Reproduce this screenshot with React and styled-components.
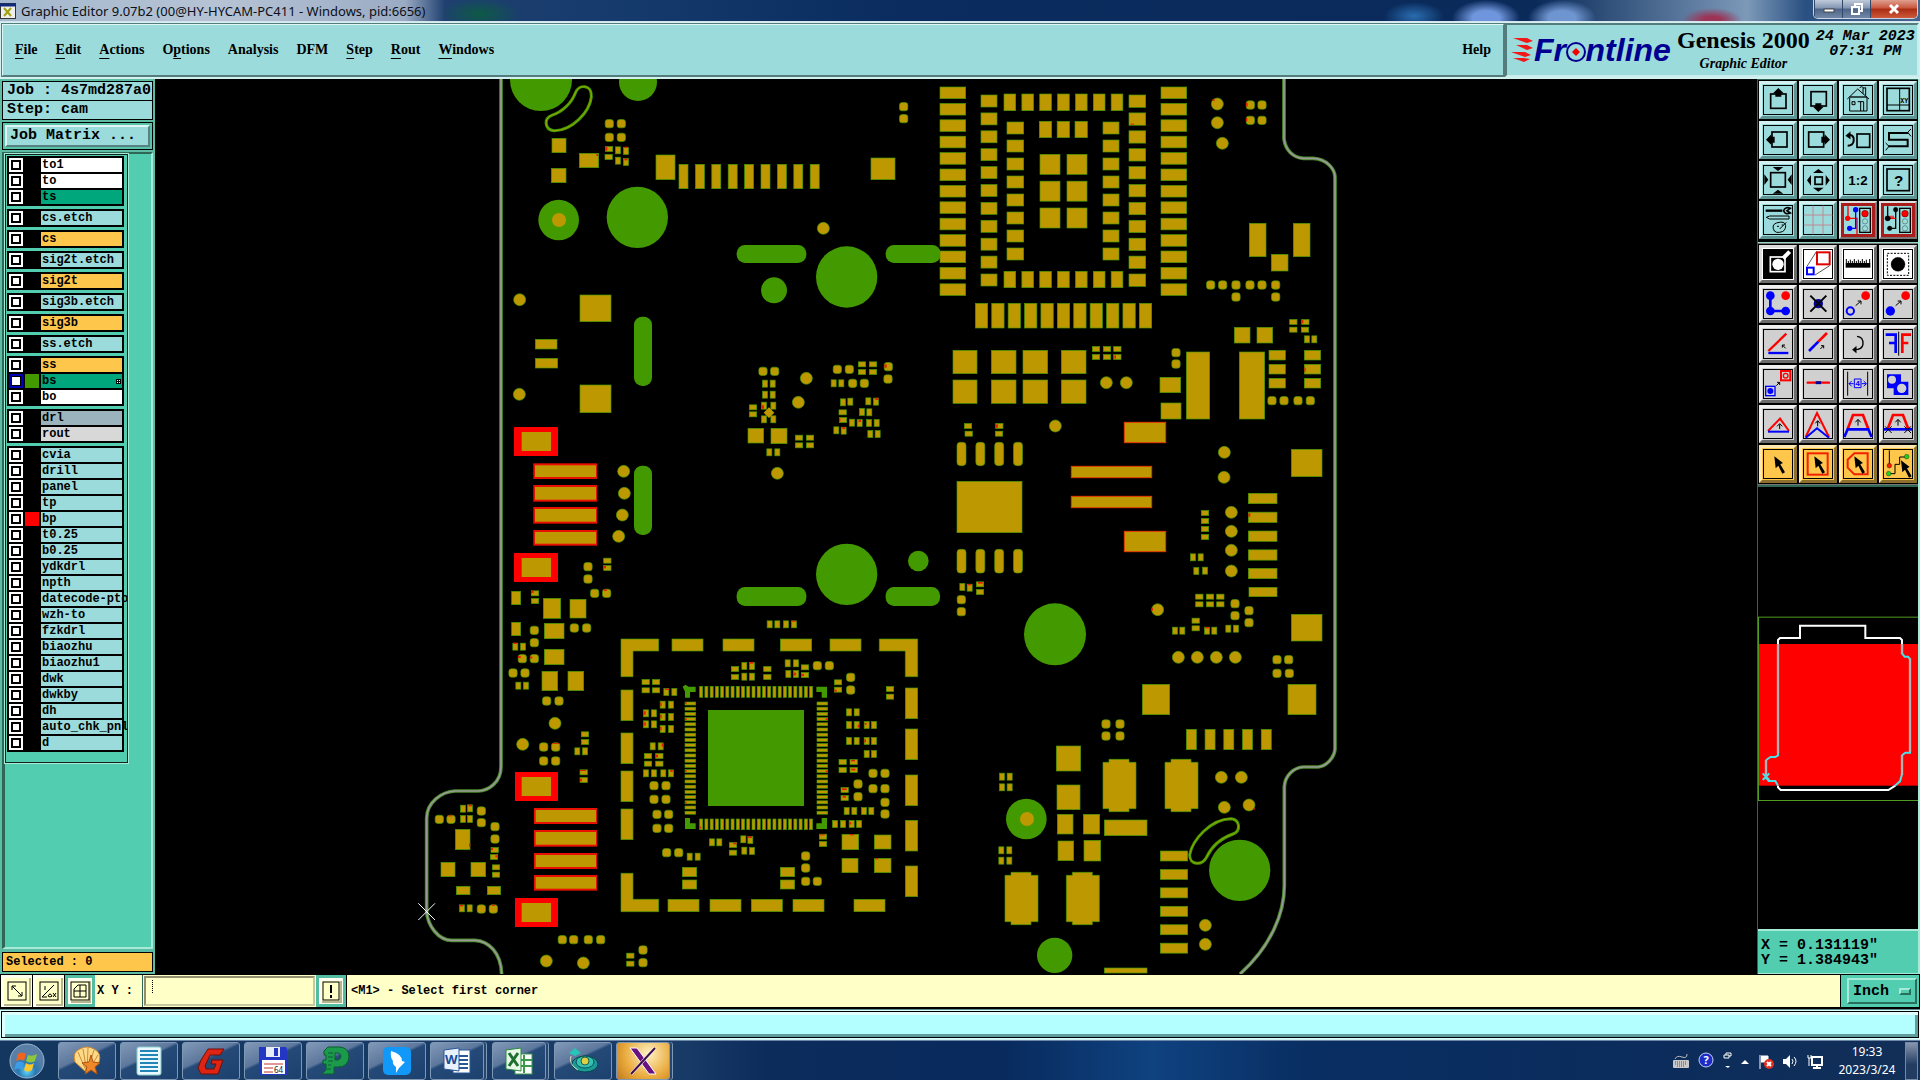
import React, {useState} from 'react';
import styled, {createGlobalStyle, css} from 'styled-components';

const GlobalStyle = createGlobalStyle`
    * {
        box-sizing: border-box;
    }
    body {
        margin: 0;
        background: #000;
        overflow: hidden;
    }
    button, input, select {
        font: inherit;
        color: inherit;
        margin: 0;
        padding: 0;
    }
    svg {
        display: block;
    }
`;

const mono = '"Liberation Mono", "DejaVu Sans Mono", monospace';
const serif = '"Liberation Serif", "DejaVu Serif", serif';
const sans = '"Noto Sans", "Open Sans", sans-serif';

const GOLD = '#bd9800';
const GREEN = '#439900';

const raised = (light, dark, width = 2) => css`
    border: ${width}px solid;
    border-color: ${light} ${dark} ${dark} ${light};
`;

const Desktop = styled.div`
    height: 100vh;
    display: flex;
    flex-direction: column;
    background: #000;
    color: #000;
    font-family: ${mono};
`;

/* title bar */

const TitleBar = styled.div`
    height: 22px;
    flex: none;
    display: flex;
    align-items: center;
    justify-content: space-between;
    border-bottom: 1px solid #d6e2ee;
    background:
        radial-gradient(ellipse 40px 16px at 480px 14px, #0d5a45 0%, transparent 100%),
        radial-gradient(ellipse 30px 14px at 1414px 16px, #2a6db0 0%, transparent 100%),
        radial-gradient(ellipse 34px 18px at 1486px 18px, #6f95dc 40%, transparent 100%),
        radial-gradient(ellipse 34px 18px at 1562px 18px, #6f95d0 40%, transparent 100%),
        radial-gradient(ellipse 30px 12px at 1712px 20px, #9c3456 30%, transparent 100%),
        linear-gradient(90deg, #a3b8ce 0, #b6c3d4 220px, #9aabc4 405px, #1f4070 445px, #153a6c 620px, #0a2c5e 900px, #0a2a5a 80%, #7c99b8 91%, #2a5082 94%, #44658f 100%);
`;

const TitleText = styled.div`
    display: flex;
    align-items: center;
    gap: 5px;
    font: 13px ${sans};
    line-height: 20px;
    color: #0b0f18;
    white-space: nowrap;
`;

const WindowButtons = styled.div`
    display: flex;
    align-self: flex-start;
    margin-right: 2px;
    border: 1px solid #c9d5e2;
    border-top: none;
    border-radius: 0 0 5px 5px;
    overflow: hidden;
`;

const WindowButton = styled.button`
    width: ${(props) => (props.$close ? 47 : 28)}px;
    height: 18px;
    display: grid;
    place-items: center;
    border: none;
    border-left: 1px solid #34486a;
    background: ${(props) => (props.$close
        ? 'linear-gradient(#e0a090, #c8553c 45%, #a82c12 50%, #cf5a3c)'
        : 'linear-gradient(#c0cbdb, #8295b2 45%, #4d6488 50%, #7288a8)')};
`;

/* header */

const Header = styled.header`
    display: flex;
    height: 57px;
    flex: none;
    padding: 1px 1px 2px;
    background: #d3f1f0;
`;

const HeaderPanel = styled.div`
    display: flex;
    align-items: center;
    background: #9bdbdb;
    border: 2px solid;
    border-color: #557c7c #c9eded #c9eded #557c7c;
`;

const MenuBar = styled(HeaderPanel)`
    flex: 1;
    border-color: #dff6f5 #557c7c #557c7c #dff6f5;
    outline: 1px solid #557c7c;
    outline-offset: -1px;
    padding: 0 12px;
    gap: 18px;
    font: bold 14px ${serif};
`;

const MenuButton = styled.button`
    border: none;
    background: none;
    margin-left: ${(props) => (props.$last ? 'auto' : '0')};
    u {
        text-underline-offset: 4px;
        text-decoration-thickness: 1px;
    }
`;

const Brand = styled(HeaderPanel)`
    width: 414px;
    padding: 0 1px 0 4px;
`;

const Product = styled.div`
    font: bold 24px ${serif};
    line-height: 28px;
    text-align: center;
    white-space: nowrap;
    em {
        display: block;
        font-size: 14px;
        line-height: 20px;
    }
`;

const HeaderClock = styled.div`
    align-self: flex-start;
    flex: 1;
    padding: 4px 0 0 5px;
    font: italic bold 15px ${mono};
    line-height: 15px;
    text-align: center;
    white-space: nowrap;
`;

/* work area */

const Workspace = styled.main`
    flex: 1;
    min-height: 0;
    display: flex;
`;

const Sidebar = styled.aside`
    width: 155px;
    flex: none;
    display: flex;
    flex-direction: column;
    padding: 2px 2px 2px;
    background: #5cbca4;
`;

const InfoBox = styled.div`
    height: 20px;
    margin-bottom: -1px;
    padding-left: 4px;
    border: 1px solid #000;
    background: #9bdbdb;
    font-size: 15px;
    font-weight: bold;
    line-height: 18px;
    white-space: nowrap;
`;

const MatrixFrame = styled.div`
    margin-top: 3px;
    padding: 2px;
    border: 1px solid #000;
    background: #58c4aa;
`;

const MatrixButton = styled.button`
    width: 100%;
    height: 22px;
    padding-left: 3px;
    background: #9bdbdb;
    ${raised('#dff6f5', '#578182')}
    font-size: 15px;
    font-weight: bold;
    line-height: 18px;
    text-align: left;
`;

const LayerArea = styled.div`
    flex: 1;
    min-height: 0;
    margin: 2px 0 3px;
    background: #52cdb0;
    border: 2px solid;
    border-color: #2f6757 #a8ead8 #a8ead8 #2f6757;
    border-left-width: 3px;
`;

const LayerList = styled.div`
    width: 123px;
    display: flex;
    flex-direction: column;
    gap: 3px;
    padding: 1px 3px 10px 1px;
    border: 1px solid #10241e;
    outline: 1px solid #a8ead8;
    overflow: hidden;
`;

const LayerGroup = styled.div`
    padding: 1px 1px 1px 2px;
    background: #000;
`;

const LayerRow = styled.div`
    display: flex;
    align-items: center;
    gap: 2px;
    height: 16px;
`;

const LayerCheck = styled.input`
    appearance: none;
    width: 14px;
    height: 14px;
    flex: none;
    border: 2px solid #fff;
    background: #fff;
    box-shadow: inset 0 0 0 2px #000;
    &:checked {
        border-color: #0000b4;
        box-shadow: inset 0 0 0 1px #000;
    }
`;

const LayerSwatch = styled.span`
    width: 14px;
    height: 14px;
    flex: none;
    background: ${(props) => props.$color || '#000'};
`;

const LayerName = styled.label`
    width: 81px;
    height: 14px;
    flex: none;
    display: flex;
    justify-content: space-between;
    align-items: center;
    padding: 0 1px;
    background: ${(props) => props.$color};
    font-size: 12px;
    font-weight: bold;
    line-height: 14px;
    white-space: nowrap;
`;

const SelectedBox = styled.div`
    height: 20px;
    padding-left: 3px;
    border: 1px solid #000;
    background: #ffc64c;
    font-size: 12px;
    font-weight: bold;
    line-height: 18px;
`;

const Canvas = styled.div`
    flex: 1;
    min-width: 0;
    background: #000;
    svg {
        width: 100%;
        height: 100%;
    }
`;

const ToolColumn = styled.aside`
    width: 163px;
    flex: none;
    display: flex;
    flex-direction: column;
    background: #000;
    border-left: 1px solid #2f6757;
    border-right: 2px solid #a8ead8;
`;

const ToolGrid = styled.div`
    display: grid;
    grid-template-columns: repeat(4, 38px);
    gap: 2px;
    padding: ${(props) => (props.$grey ? '1px 0 1px 1px' : '1px 0 3px 1px')};
    border-top: 1px solid ${(props) => (props.$grey ? '#777' : '#2f6757')};
    border-bottom: 1px solid ${(props) => (props.$grey ? '#777' : '#8fd8c8')};
`;

const toolTones = {
    teal: ['#9bdbdb', '#d3f1f0', '#5d9494'],
    white: ['#fff', '#dcdcdc', '#6c6c6c'],
    grey: ['#d0d0d0', '#f0f0f0', '#6c6c6c'],
    gold: ['#ffc64c', '#ffe8b0', '#8f6f2c'],
    red: ['#9bdbdb', '#e0e0e0', '#777'],
};

const ToolButton = styled.button`
    width: 38px;
    height: 38px;
    display: grid;
    place-items: center;
    background: ${(props) => toolTones[props.$tone][0]};
    ${(props) => raised(toolTones[props.$tone][1], toolTones[props.$tone][2], 3)}
    ${(props) => props.$tone === 'red' && css`
        outline: 3px solid #a81c1c;
        outline-offset: -5px;
    `}
    svg {
        width: 30px;
        height: 30px;
    }
`;

const Overview = styled.div`
    flex: 1;
    min-height: 0;
    border-top: 2px solid #2f6757;
    svg {
        width: 100%;
        height: 100%;
    }
`;

const Coordinates = styled.div`
    height: 45px;
    flex: none;
    padding: 7px 3px;
    border-top: 2px solid #a8ead8;
    border-bottom: 1px solid #a8ead8;
    background: #52cdb0;
    font-size: 15px;
    font-weight: bold;
    line-height: 15px;
    white-space: pre;
`;

/* command line */

const CommandBar = styled.div`
    height: 35px;
    flex: none;
    display: flex;
    align-items: stretch;
    border: 1px solid #000;
    border-bottom-width: 2px;
    background: #ffffc8;
    font-size: 12px;
    font-weight: bold;
`;

const CommandButton = styled.button`
    width: ${(props) => (props.$green ? 30 : 32)}px;
    display: grid;
    place-items: center;
    border: ${(props) => (props.$green ? '3px solid #52bda0' : '1px solid #000')};
    border-width: ${(props) => (props.$green ? '3px' : '0 1px 0 0')};
    background: #ffffc8;
    box-shadow: inset 1px 1px 0 2px #fffff0, inset -1px -1px 0 2px #b5b58f;
    svg {
        width: 20px;
        height: 20px;
    }
`;

const XYLabel = styled.label`
    display: flex;
    align-items: center;
    width: 48px;
    padding-left: 2px;
    white-space: nowrap;
    border-right: 1px solid #2f6757;
`;

const XYInput = styled.input`
    width: 171px;
    padding: 0 6px;
    border: 2px solid;
    border-color: #8f8f70 #c8c8a0 #c8c8a0 #8f8f70;
    margin: 1px;
    background: repeating-linear-gradient(#000 0 1px, transparent 1px 2px) 6px 2px / 1px 14px no-repeat #ffffc8;
    outline: none;
`;

const Prompt = styled.div`
    flex: 1;
    display: flex;
    align-items: center;
    padding-left: 4px;
    border-left: 1px solid #000;
`;

const UnitFrame = styled.div`
    width: 79px;
    display: grid;
    align-items: center;
    padding: 2px 2px 2px 6px;
    border-left: 1px solid #000;
    background: #52cdb0;
    font-size: 15px;
`;

const UnitSelect = styled.select`
    grid-area: 1 / 1;
    width: 100%;
    height: 26px;
    padding-left: 4px;
    appearance: none;
    border-radius: 0;
    background: #52cdb0;
    ${raised('#a8ead8', '#28705c')}
    font-weight: bold;
`;

const UnitMark = styled.span`
    grid-area: 1 / 1;
    justify-self: end;
    width: 12px;
    height: 7px;
    margin-right: 6px;
    pointer-events: none;
    ${raised('#a8ead8', '#28705c')}
`;

const MessageBar = styled.div`
    height: 31px;
    flex: none;
    padding: 1px;
    border-top: 1px solid #63898a;
    border-bottom: 1px solid #cfeeee;
    background: #d8ffff;
    div {
        height: 100%;
        background: #b3ffff;
        border: 1px solid #000;
        box-shadow: inset 2px 2px 0 1px #dfffff, inset -2px -2px 0 1px #5f9c9c;
    }
`;

/* taskbar */

const Taskbar = styled.footer`
    height: 40px;
    flex: none;
    display: flex;
    align-items: center;
    gap: 4px;
    padding: 0 2px 0 4px;
    border-top: 1px solid #6d86a8;
    background: linear-gradient(90deg, #14375f 0, #1a3d68 670px, #0c2c5c 40%, #082a5c 52%, #0f4280 60%, #092e62 68%, #0b2c5c 86%, #122f57 100%);
`;

const StartButton = styled.button`
    width: 46px;
    height: 39px;
    margin-right: 4px;
    display: grid;
    place-items: center;
    border: none;
    background: none;
`;

const TaskButton = styled.button`
    width: ${(props) => (props.$stack ? 54 : 58)}px;
    margin-right: ${(props) => (props.$stack ? 4 : 0)}px;
    height: 38px;
    display: grid;
    place-items: center;
    border: 1px solid #7e97b5;
    border-radius: 3px;
    background: ${(props) => (props.$active
        ? 'radial-gradient(circle at 60% 30%, #fff2c0, #e9a93c 60%, #c07a20)'
        : 'linear-gradient(155deg, #8299b8 0, #5d789d 40%, #264a78 45%, #1c416f 100%)')};
    box-shadow: ${(props) => (props.$stack ? '2px 0 0 #27466f, 3px 0 0 #7e97b5' : 'none')};
    svg {
        width: 30px;
        height: 30px;
    }
`;

const Tray = styled.div`
    margin-left: auto;
    display: flex;
    align-items: center;
    gap: 9px;
    svg {
        height: 18px;
    }
`;

const TrayClock = styled.div`
    width: 70px;
    font: 12px ${sans};
    line-height: 18px;
    color: #fff;
    text-align: center;
`;

const ShowDesktop = styled.button`
    width: 13px;
    height: 38px;
    margin-left: -6px;
    border: 1px solid #7389a6;
    background: linear-gradient(#8796ac, #223c62 60%);
`;

/* layers */

const AQUA = '#9bdbdb';
const ORANGE = '#ffc64c';
const layerGroups = [
    [['to1', '#fff'], ['to', '#fff'], ['ts', '#00a67c']],
    [['cs.etch', AQUA]],
    [['cs', ORANGE]],
    [['sig2t.etch', AQUA]],
    [['sig2t', ORANGE]],
    [['sig3b.etch', AQUA]],
    [['sig3b', ORANGE]],
    [['ss.etch', AQUA]],
    [['ss', ORANGE], ['bs', '#00a67c', GREEN], ['bo', '#fff']],
    [['drl', '#9ab3bd'], ['rout', '#d8d8d8']],
    [
        ['cvia', AQUA], ['drill', AQUA], ['panel', AQUA], ['tp', AQUA], ['bp', AQUA, '#f00'],
        ['t0.25', AQUA], ['b0.25', AQUA], ['ydkdrl', AQUA], ['npth', AQUA], ['datecode-pto', AQUA],
        ['wzh-to', AQUA], ['fzkdrl', AQUA], ['biaozhu', AQUA], ['biaozhu1', AQUA], ['dwk', AQUA],
        ['dwkby', AQUA], ['dh', AQUA], ['auto_chk_pnl', AQUA], ['d', AQUA],
    ],
];

/* board data: every quadrant has its own origin, three units to a pixel */

const row = (n, x, y, w, h, dx, dy = 0) =>
    Array.from({length: n}, (_, i) => [x + dx * i, y + dy * i, w, h]);

const quadrants = [
    {
        x: 795, y: 3,
        pads: [
            [396, 175, 42, 43], [478, 220, 58, 43], [394, 265, 44, 43], [708, 225, 57, 74],
            ...row(9, 777, 253, 27, 73, 49.2), [1353, 234, 72, 65], [480, 645, 93, 80], [480, 915, 93, 83],
            [346, 778, 65, 29], [346, 835, 67, 29], [984, 1045, 47, 44], [1053, 1045, 48, 46],
        ],
        dots: [[1451, 80], [1451, 116], [568, 131], [604, 131], [568, 172], [604, 172], [1029, 874], [1064, 874],
            [1252, 868], [1288, 868], [1405, 860], [1404, 897], [1298, 910], [1333, 910]],
        tall: [[594, 211], [618, 213], [594, 242], [618, 246], [1035, 911], [1058, 911], [1035, 944], [1058, 944],
            [1032, 977], [1060, 977], [1032, 1018], [1060, 1018], [1048, 1117], [1072, 1117], [1241, 910], [1264, 910],
            [1269, 967], [1291, 965], [1345, 964], [1368, 965], [1326, 996], [1348, 997], [1296, 1028], [1319, 1029],
            [1347, 1029], [1370, 1029], [1249, 1051], [1271, 1052], [1351, 1062], [1373, 1062]],
        wide: [[567, 207], [566, 231], [999, 982], [999, 1003], [1326, 853], [1359, 853], [1326, 876], [1359, 876],
            [1268, 997], [1269, 1020], [1137, 1073], [1170, 1073], [1137, 1096], [1170, 1096]],
        vias: [[1210, 445], [299, 659], [298, 943], [1159, 895], [1135, 967], [1072, 1180], [611, 1174], [613, 1240],
            [607, 1305], [596, 1369]],
        holes: [[363, 0, 93], [654, 6, 57], [416, 420, 61], [652, 412, 92], [1280, 591, 92], [1062, 631, 39],
            [1280, 1483, 92], [1495, 1443, 31]],
        slots: [[950, 495, 209, 54], [1397, 495, 165, 54], [642, 710, 54, 208], [642, 1157, 54, 208],
            [950, 1521, 209, 57], [1397, 1521, 163, 57]],
        marked: [[282, 1041, 132, 87], [282, 1419, 132, 87]],
        bars: [[340, 1150, 191, 47], [340, 1215, 191, 50], [340, 1281, 191, 50], [340, 1350, 191, 47]],
        specks: [[556, 200, 6, 12], [613, 200, 10, 4], [613, 236, 10, 5], [1393, 853, 7, 10], [1026, 976, 6, 10],
            [1366, 953, 9, 7], [1257, 1014, 4, 10], [1316, 1020, 7, 6], [1267, 1041, 9, 6], [529, 222, 5, 6]],
    },
    {
        x: 2295, y: 3,
        pads: [
            ...row(13, 60, 21, 77, 35, 0, 49.2), ...row(13, 723, 21, 77, 35, 0, 49.2),
            ...row(11, 183, 45, 48, 36, 0, 53.7), ...row(11, 627, 45, 50, 37, 0, 53.7),
            ...row(7, 252, 42, 35, 50, 53.6), ...row(7, 252, 574, 35, 49, 53.6),
            ...row(8, 261, 126, 50, 36, 0, 54), ...row(8, 549, 126, 48, 36, 0, 54), ...row(3, 358, 124, 37, 49, 53.5),
            ...row(3, 360, 223, 60, 60, 0, 80.5), ...row(3, 441, 223, 60, 60, 0, 80.5),
            ...row(11, 166, 670, 37, 74, 49.2),
            ...row(2, 99, 811, 72, 70, 0, 89), ...row(2, 214, 811, 74, 70, 0, 89),
            ...row(2, 309, 811, 74, 70, 0, 89), ...row(2, 424, 811, 74, 70, 0, 89),
            [720, 892, 62, 46], [723, 969, 60, 48], [799, 816, 70, 201], [958, 816, 76, 201],
            [943, 742, 47, 47], [1011, 742, 47, 47], ...row(3, 1047, 811, 49, 29, 0, 42), ...row(3, 1153, 811, 49, 29, 0, 42),
            [988, 430, 50, 100], [1120, 430, 50, 100], [1054, 523, 50, 50], [111, 1204, 195, 154],
            [1114, 1108, 92, 82], ...row(4, 985, 1240, 86, 31, 0, 56.5),
        ],
        dots: [[768, 818], [768, 852], [1056, 962], [1092, 962], [1134, 962], [1171, 962], [991, 75], [1026, 75],
            [991, 121], [1026, 121], [872, 615], [908, 615], [948, 615], [990, 615], [1026, 615], [1067, 615],
            [948, 651], [1067, 651]],
        tall: [[1161, 778], [1183, 778], [819, 1432], [842, 1432]],
        wide: [[528, 807], [561, 807], [592, 807], [528, 831], [561, 831], [592, 831], [1120, 726], [1156, 726],
            [1120, 749], [1155, 749], [144, 1038], [146, 1061], [238, 1038], [237, 1061], [855, 1299], [855, 1323],
            [855, 1347], [855, 1371]],
        vias: [[559, 908], [619, 908], [892, 72], [892, 128], [907, 190], [406, 1038], [913, 1117], [912, 1192],
            [934, 1297], [934, 1354], [934, 1411]],
        pills: [...row(4, 111, 1087, 27, 70, 56.5), ...row(4, 111, 1408, 27, 71, 56.5)],
        edged: [[613, 1027, 124, 61], [613, 1354, 124, 61], [454, 1159, 241, 34], [454, 1249, 241, 34]],
        specks: [[978, 68, 5, 12], [978, 114, 4, 10], [1146, 720, 4, 10], [228, 1033, 6, 10], [1153, 863, 4, 12],
            [985, 1300, 6, 10], [583, 826, 5, 10], [877, 58, 7, 5], [632, 131, 10, 3]],
    },
    {
        x: 795, y: 1443,
        pads: [
            [275, 94, 27, 40], [275, 187, 27, 40], [370, 115, 52, 60], [450, 118, 48, 56], [373, 190, 59, 46],
            [373, 268, 59, 46], [366, 334, 47, 58], [444, 334, 47, 58], [106, 808, 44, 61], [63, 907, 42, 43],
            [153, 907, 44, 43], [109, 979, 41, 25], [202, 979, 40, 25], [787, 922, 43, 28], [787, 960, 43, 27],
            [1081, 922, 43, 28], [1081, 960, 43, 27], [1266, 823, 50, 46], [1363, 825, 50, 42], [1266, 895, 48, 43],
            [1363, 895, 50, 43], [756, 237, 93, 36], [909, 237, 93, 36], [1081, 237, 94, 36], [1230, 237, 93, 36],
            [603, 390, 36, 92], [603, 519, 36, 92], [603, 633, 36, 92], [603, 747, 36, 92], [744, 1018, 93, 37],
            [870, 1018, 93, 37], [994, 1018, 93, 37], [1119, 1018, 93, 37], [1302, 1018, 93, 37],
            [1456, 384, 37, 92], [1456, 507, 37, 92], [1456, 645, 37, 92], [1456, 781, 37, 92], [1456, 918, 37, 92],
        ],
        pins: [...row(22, 839, 379, 9, 33, 15.7), ...row(22, 839, 777, 9, 32, 15.7),
            ...row(22, 795, 426, 32, 9, 0, 15.6), ...row(22, 1191, 426, 32, 9, 0, 15.6)],
        dots: [[504, 20], [504, 57], [524, 100], [560, 100], [343, 211], [343, 248], [463, 204], [500, 204], [307, 296],
            [343, 296], [279, 339], [315, 339], [380, 423], [417, 423], [371, 561], [407, 561], [371, 603], [407, 603],
            [184, 753], [184, 788], [225, 800], [225, 837], [58, 778], [93, 778], [184, 1047], [220, 1047],
            [427, 1139], [461, 1139], [505, 1139], [542, 1139], [669, 1170], [669, 1208], [1192, 317], [1228, 317],
            [1292, 352], [1292, 390], [702, 677], [738, 677], [702, 718], [738, 718], [711, 763], [746, 763],
            [711, 805], [746, 805], [740, 878], [776, 878], [1157, 888], [1157, 924], [1157, 964], [1192, 964],
            [1314, 672], [1314, 710], [1359, 640], [1395, 640], [1359, 686], [1395, 686], [1395, 727], [1395, 762]],
        tall: [[286, 260], [309, 260], [295, 377], [318, 377], [472, 574], [495, 574], [129, 746], [150, 745], [129, 777],
            [150, 777], [126, 1045], [149, 1045], [1049, 193], [1072, 193], [1098, 193], [1122, 193], [973, 318],
            [996, 318], [973, 350], [996, 350], [1103, 310], [1128, 310], [1105, 342], [1128, 342], [739, 396],
            [763, 396], [728, 434], [753, 434], [728, 471], [753, 471], [728, 507], [753, 507], [678, 460], [702, 460],
            [678, 493], [702, 493], [698, 559], [722, 559], [678, 640], [702, 640], [730, 640], [753, 640],
            [809, 890], [833, 890], [876, 847], [898, 847], [970, 838], [991, 840], [973, 872], [996, 873],
            [1287, 457], [1310, 457], [1287, 495], [1310, 495], [1340, 495], [1362, 495], [1287, 543], [1310, 543],
            [1340, 543], [1362, 543], [1340, 582], [1362, 582], [1280, 753], [1303, 753], [1332, 753], [1354, 753],
            [1245, 792], [1269, 792], [1295, 792], [1317, 792]],
        wide: [[562, 2], [562, 24], [345, 100], [345, 123], [495, 523], [495, 546], [491, 637], [491, 660], [224, 870],
            [222, 891], [228, 922], [228, 944], [631, 1187], [631, 1211], [945, 327], [945, 351], [1042, 327],
            [1042, 351], [1155, 322], [1155, 345], [1254, 367], [1254, 389], [1410, 387], [1410, 410], [677, 366],
            [708, 366], [677, 391], [708, 391], [684, 588], [718, 588], [684, 611], [718, 611], [939, 855],
            [939, 878], [1209, 830], [1209, 852], [1268, 606], [1301, 606], [1268, 630], [1301, 630], [1274, 690],
            [1274, 714]],
        vias: [[405, 490], [308, 553], [379, 1203], [490, 1209]],
        marked: [[285, 636, 129, 87], [285, 1014, 129, 87]],
        bars: [[342, 744, 189, 48], [342, 810, 189, 50], [342, 879, 189, 48], [342, 945, 189, 47]],
        specks: [[552, 18, 6, 7], [333, 92, 8, 7], [552, 88, 8, 5], [281, 248, 10, 4], [294, 288, 8, 6], [330, 290, 7, 5],
            [398, 549, 18, 3], [480, 630, 18, 3], [480, 656, 6, 8], [146, 734, 10, 5], [85, 766, 12, 3], [147, 850, 4, 10],
            [213, 864, 6, 6], [226, 886, 6, 6], [120, 1035, 10, 4], [216, 1034, 8, 4], [990, 306, 10, 5], [672, 454, 5, 10],
            [672, 487, 5, 10], [721, 428, 4, 10], [721, 465, 4, 10], [721, 501, 4, 10], [725, 550, 5, 10], [708, 584, 6, 8],
            [751, 630, 7, 6], [1145, 342, 7, 6], [1122, 338, 6, 8], [1243, 389, 7, 6], [1313, 494, 4, 8], [1333, 538, 5, 9],
            [1334, 489, 6, 5], [1293, 600, 12, 4], [1294, 626, 12, 5], [1266, 685, 14, 5], [1268, 708, 10, 5],
            [1288, 787, 6, 6], [1290, 822, 12, 4], [1365, 894, 9, 4], [1200, 823, 14, 3], [940, 848, 10, 5], [984, 829, 12, 5],
            [795, 426, 5, 5], [795, 475, 5, 5], [795, 630, 5, 5], [795, 725, 5, 5], [838, 800, 6, 5], [1217, 475, 6, 5],
            [1217, 632, 6, 5], [735, 386, 12, 4], [1116, 182, 12, 3]],
    },
    {
        x: 2295, y: 1443,
        pads: [
            [985, 25, 86, 31], [987, 82, 84, 28], [1114, 163, 92, 80], [667, 373, 82, 91], [1104, 373, 84, 91],
            ...row(5, 799, 508, 30, 61, 56.2), [409, 558, 73, 75], [411, 675, 69, 74], [412, 763, 47, 59], [490, 763, 49, 59],
            [414, 843, 47, 59], [492, 841, 50, 62], [553, 780, 128, 47], [553, 1224, 128, 15],
            ...row(6, 721, 873, 82, 30, 0, 55.3),
        ],
        dots: [[124, 119], [124, 155], [945, 131], [945, 167], [987, 152], [987, 188], [1071, 299], [1106, 299],
            [1071, 340], [1108, 340], [558, 492], [600, 492], [558, 528], [600, 528]],
        tall: [[127, 81], [149, 83], [829, 33], [855, 32], [765, 212], [787, 212], [861, 212], [883, 212], [925, 206],
            [948, 206], [246, 650], [269, 650], [246, 682], [269, 682], [244, 871], [268, 871], [244, 902], [268, 902]],
        wide: [[180, 73], [180, 96], [838, 110], [870, 110], [901, 110], [838, 133], [870, 133], [901, 133], [827, 182],
            [827, 205]],
        vias: [[934, 33], [713, 149], [775, 292], [832, 292], [889, 292], [946, 292], [904, 652], [964, 652], [913, 742],
            [987, 735], [856, 1096], [856, 1153]],
        holes: [[405, 223, 93], [319, 777, 61], [959, 931, 92], [404, 1186, 53]],
        caps: [[549, 598], [735, 598], [255, 937], [439, 937]],
        specks: [[144, 72, 10, 4], [174, 66, 14, 5], [855, 201, 12, 4], [695, 144, 4, 8], [1000, 745, 5, 4]],
    },
];

const rects = (list, props = {}) => (list || []).map(([x, y, w, h], i) => (
    <rect key={i} x={x} y={y} width={w} height={h} {...props}/>
));
const centred = (list, w, h, props = {}) =>
    rects((list || []).map(([x, y]) => [x - w / 2, y - h / 2, w, h]), props);

const Quadrant = ({q}) => (
    <g transform={`translate(${q.x} ${q.y})`}>
        <g fill={GREEN}>
            {(q.holes || []).map(([x, y, r], i) => <circle key={i} cx={x} cy={y} r={r}/>)}
            {rects(q.slots, {rx: 25})}
        </g>
        <g fill={GOLD} stroke={GREEN} strokeWidth="2">
            {rects(q.pads)}
            {rects(q.pills, {rx: 10})}
            {centred(q.dots, 25, 25, {rx: 8})}
            {centred(q.tall, 15, 21)}
            {centred(q.wide, 22, 15)}
            {(q.vias || []).map(([x, y], i) => <circle key={i} cx={x} cy={y} r="18"/>)}
            {rects(q.pins)}
            {(q.caps || []).map(([x, y], i) => (
                <path key={i} transform={`translate(${x} ${y})`}
                      d="M18 0h60v9h21v139h-21v9h-60v-9h-18v-139h18z"/>
            ))}
        </g>
        {rects(q.marked, {fill: '#f00'})}
        {rects((q.marked || []).map(([x, y]) => [q.y > 100 ? x + 20 : x + 23, y + 15, 88, 57]), {fill: GOLD})}
        {rects(q.bars, {fill: '#e81000'})}
        {rects((q.bars || []).map(([x, y, w, h]) => [x + 5, y + 6, w - 8, h - 12]), {fill: GOLD})}
        {rects(q.edged, {fill: GOLD, stroke: '#e83a00', strokeWidth: 3})}
        {rects(q.specks, {fill: '#e02000'})}
    </g>
);

const outline = `M1038 0 V2063 C1038 2110 1000 2136 970 2136 H900 C860 2138 815 2170 815 2218 V2498
    C818 2540 850 2584 890 2584 H960 C1000 2586 1038 2620 1040 2685
    M3387 0 V180 C3392 215 3415 236 3445 238 H3475 C3515 240 3540 270 3540 295 V2010
    C3538 2035 3515 2062 3490 2064 H3445 C3415 2066 3390 2090 3388 2123 V2420 C3388 2500 3350 2600 3255 2685`;

const Board = () => (
    <svg viewBox="0 0 4806 2685" preserveAspectRatio="xMidYMid slice" role="img" aria-label="Board artwork">
        <path d={outline} fill="none" stroke="#4b8a28" strokeWidth="11"/>
        <path d={outline} fill="none" stroke="#9a9a9a" strokeWidth="5"/>
        {quadrants.map((q, i) => <Quadrant key={i} q={q}/>)}
        <g fill={GOLD}>
            <circle cx="1212" cy="423" r="21"/>
            <circle cx="2616" cy="2220" r="21"/>
            <path d="M1842 985l16 16-16 16-16-16z"/>
        </g>
        <g transform="translate(795 1443)">
            <path d="M603 237H716V273H639V350H603ZM1378 237H1493V350H1456V273H1378ZM603 940H639V1018H716V1055H603Z"
                  fill={GOLD} stroke={GREEN} strokeWidth="2"/>
            <path d="M864 450h288v288h-288zM788 380l8-6 10 6H827V396H810V413H795V395ZM1189 380H1221V413H1205V396H1189ZM795 774H810V790H827V807H795ZM1205 774H1221V807H1189V790H1205Z"
                  fill={GREEN}/>
            <path d="M-5 1030l50 50M45 1030l-50 50" stroke="#fff" strokeWidth="3"/>
        </g>
        {[['#439900', 9], ['#9aa800', 3]].map(([stroke, width]) => (
            <g key={stroke} fill="none" stroke={stroke} strokeWidth={width}>
                <path d="M1261 42C1272 14 1312 16 1309 54C1304 100 1250 156 1197 155C1168 152 1166 118 1190 109C1222 99 1250 72 1261 42Z"/>
                <path d="M3104 2327C3112 2285 3165 2220 3228 2219C3256 2222 3258 2256 3234 2265C3200 2277 3172 2298 3155 2334C3140 2362 3103 2358 3104 2327Z"/>
            </g>
        ))}
    </svg>
);

const OverviewMap = () => (
    <svg viewBox="24 21 480 1326" preserveAspectRatio="xMidYMid slice" role="img" aria-label="Overview">
        <rect x="24" y="492" width="480" height="425" fill="#f00"/>
        <path d="M24 411.500H504M24 961.500H504M25.500 411V961" stroke="#4f9a20" strokeWidth="3" fill="none"/>
        <path d="M84 492V480L90 474H150V437H346V474H450L456 480V492M84 917V922L92 930H415L436 917"
              fill="none" stroke="#fff" strokeWidth="6"/>
        <path d="M84 492V820M48 840V895M456 492V522M480 535V817M456 825V885" stroke="#b4b4b4" strokeWidth="7"/>
        <path d="M84 819V826L76 831H62L48 840M48 893L56 903H76L84 917M456 520L464 530H474L480 537M480 815V818H466L456 826M456 883L450 904L434 918M38 880l20 20M58 880l-20 20"
              fill="none" stroke="#4be0e8" strokeWidth="6"/>
    </svg>
);

/* tool icons, drawn in a 90 unit box */

const arrow = 'M0 -13L16 3H9V13H-9V3H-16Z';
const Arrow = ({x, y, turn = 0}) => (
    <path d={arrow} fill="#000" stroke="none" transform={`translate(${x} ${y}) rotate(${turn})`}/>
);
const head = 'M-16 0H16L0 -12Z';
const Head = ({x, y, turn}) => <path d={head} fill="#000" stroke="none" transform={`translate(${x} ${y}) rotate(${turn})`}/>;
const pointer = 'M34 22L60 42L52 46L66 70L58 74L46 50L38 58Z';
const small = <path d="M38 50L54 36M44 36H54V46" strokeWidth="3"/>;

const tools = [
    ['Pan up', 'teal', <><rect x="23" y="27" width="46" height="43" strokeWidth="5"/><Arrow x={46} y={22}/></>],
    ['Pan down', 'teal', <><rect x="24" y="20" width="46" height="43" strokeWidth="5"/><Arrow x={46} y={68} turn={180}/></>],
    ['Home', 'teal', <><path d="M13 42L44 12L78 42M20 38V78H72V38M44 50H62V78M53 50V78M27 50H36V59H27ZM60 26V10L68 8V32M50 8q6-6 12 0" strokeWidth="3"/><path d="M20 36H72" strokeWidth="4"/></>],
    ['Zoom XY', 'teal', <><rect x="12" y="10" width="67" height="67" strokeWidth="5"/><path d="M50 12V76M12 60H78" strokeWidth="3"/><text x="52" y="54" fontSize="20" fontFamily={mono} fontWeight="bold" fill="#000" stroke="none">XY</text></>],
    ['Pan left', 'teal', <><rect x="27" y="21" width="45" height="45" strokeWidth="5"/><Arrow x={22} y={44} turn={-90}/></>],
    ['Pan right', 'teal', <><rect x="17" y="21" width="45" height="45" strokeWidth="5"/><Arrow x={68} y={44} turn={90}/></>],
    ['Previous view', 'teal', <><rect x="42" y="27" width="38" height="40" strokeWidth="5"/><path d="M14 30H22Q34 32 32 48Q30 62 14 62" strokeWidth="6"/><path d="M8 32L22 20V42Z" fill="#000"/></>],
    ['Snake', 'teal', <><path d="M76 24H18V44H74V64H16" strokeWidth="6"/><path d="M84 12L74 22L84 34M8 54L18 64L8 76" strokeWidth="3"/></>],
    ['Zoom out', 'teal', <><rect x="23" y="23" width="44" height="43" strokeWidth="5"/><Head x={45} y={6} turn={180}/><Head x={45} y={86} turn={0}/><Head x={4} y={44} turn={90}/><Head x={86} y={44} turn={-90}/></>],
    ['Zoom in', 'teal', <><rect x="36" y="36" width="22" height="22" strokeWidth="5"/><Head x={46} y={24} turn={0}/><Head x={46} y={68} turn={180}/><Head x={24} y={46} turn={-90}/><Head x={68} y={46} turn={90}/></>],
    ['Zoom 1:2', 'teal', <text x="45" y="60" fontSize="40" textAnchor="middle" fontFamily={'"Liberation Sans", sans-serif'} fontWeight="bold" fill="#000" stroke="none">1:2</text>],
    ['Query', 'teal', <><rect x="12" y="12" width="67" height="65" strokeWidth="5"/><text x="47" y="62" fontSize="46" textAnchor="middle" fontFamily={'"Liberation Sans", sans-serif'} fontWeight="bold" fill="#000" stroke="none">?</text></>],
    ['Settings', 'teal', <><path d="M8 17H58" strokeWidth="7"/><path d="M82 10Q66 4 62 17Q66 30 82 24L72 17Z" strokeWidth="5"/><path d="M10 37L20 33H78V42H20Z" strokeWidth="3"/><path d="M34 78Q24 60 40 54Q66 46 68 62Q68 80 50 82Q40 84 34 78ZM50 72L70 52M42 64h6M56 60h5" strokeWidth="3"/></>],
    ['Grid', 'teal', <path d="M30 2V88M60 2V88M2 30H88M2 60H88" stroke="#c08a96" strokeWidth="3"/>],
    ['Net highlight', 'red', <><path d="M15 4V40H42V88" stroke="#f00" strokeWidth="4"/><path d="M38 10V70H20" stroke="#00f" strokeWidth="4"/><circle cx="14" cy="40" r="8" fill="#f00" stroke="none"/><circle cx="38" cy="14" r="8" fill="#00f" stroke="none"/><circle cx="20" cy="70" r="8" fill="#00f" stroke="none"/><rect x="50" y="10" width="32" height="72" strokeWidth="4"/><circle cx="66" cy="26" r="10" fill="#f00"/><circle cx="66" cy="49" r="8"/><circle cx="66" cy="70" r="8"/></>],
    ['Net check', 'red', <><path d="M14 4V40M38 10V70H20" strokeWidth="4"/><path d="M20 40H38M24 32V42M30 32V42" stroke="#f00" strokeWidth="4"/><circle cx="14" cy="40" r="8" fill="#000"/><circle cx="38" cy="14" r="7" fill="#000"/><circle cx="20" cy="70" r="7" fill="#000"/><rect x="50" y="10" width="32" height="72" strokeWidth="4"/><circle cx="66" cy="26" r="10" fill="#f00"/><circle cx="66" cy="49" r="8"/><circle cx="66" cy="70" r="8"/></>],
];

const editTools = [
    ['Contour', 'white', <><rect x="0" y="0" width="90" height="90" fill="#000"/><rect x="22" y="24" width="44" height="44" stroke="#fff" strokeWidth="5"/><circle cx="45" cy="46" r="17" fill="#fff" stroke="none"/><path d="M60 28L80 8" stroke="#fff" strokeWidth="12"/></>],
    ['Scale', 'white', <><rect x="42" y="10" width="38" height="36" stroke="#e00000" strokeWidth="6"/><rect x="12" y="56" width="20" height="20" stroke="#00f" strokeWidth="6"/><path d="M12 52L40 8M36 78L80 50" strokeWidth="2"/></>],
    ['Ruler', 'white', <><rect x="8" y="42" width="74" height="14" fill="#000" stroke="none"/><path d="M10 42V30M16 42V36M22 42V32M28 42V36M34 42V30M40 42V36M46 42V32M52 42V36M58 42V30M64 42V36M70 42V32M80 42V30" strokeWidth="3"/></>],
    ['Symbol', 'white', <><rect x="13" y="13" width="64" height="66" strokeWidth="3" strokeDasharray="6 4"/><circle cx="45" cy="46" r="21" fill="#000"/></>],
    ['Copy chain', 'grey', <><path d="M22 20V66H68" stroke="#00f" strokeWidth="8"/><g fill="#00f" stroke="none"><circle cx="22" cy="20" r="13"/><circle cx="22" cy="66" r="13"/><circle cx="68" cy="66" r="13"/></g><circle cx="68" cy="20" r="13" fill="#f00" stroke="none"/></>],
    ['Delete', 'grey', <><circle cx="46" cy="44" r="14" fill="#00009c" stroke="none"/><path d="M22 20L70 68M70 20L22 68" strokeWidth="6"/></>],
    ['Copy', 'grey', <><circle cx="22" cy="66" r="11" stroke="#00f" strokeWidth="6"/><circle cx="68" cy="20" r="13" fill="#f00" stroke="none"/>{small}</>],
    ['Move', 'grey', <><circle cx="22" cy="66" r="14" fill="#00f" stroke="none"/><circle cx="68" cy="20" r="13" fill="#f00" stroke="none"/>{small}</>],
    ['Rotate line', 'grey', <><path d="M16 66L70 14" stroke="#f00" strokeWidth="7"/><path d="M16 72H76" stroke="#00f" strokeWidth="7"/><path d="M68 58L58 48M58 56V48H66" strokeWidth="3"/></>],
    ['Extend line', 'grey', <><path d="M18 66L46 38" stroke="#00f" strokeWidth="8"/><path d="M46 38L72 12" stroke="#f00" strokeWidth="8"/><path d="M52 60L62 50M54 50H62V58" strokeWidth="3"/></>],
    ['Rotate', 'grey', <><path d="M42 22Q62 24 60 46Q58 62 34 62" strokeWidth="4"/><path d="M28 62L40 52V72Z" fill="#000"/></>],
    ['Mirror', 'grey', <><path d="M8 17H38V72M38 42H18" stroke="#00f" strokeWidth="8"/><path d="M84 17H58V72M58 42H76" stroke="#f00" strokeWidth="8"/><path d="M47 8V80" strokeWidth="3"/></>],
    ['Step copy', 'grey', <><rect x="54" y="6" width="28" height="28" stroke="#f00" strokeWidth="6"/><circle cx="68" cy="20" r="7" stroke="#f00" strokeWidth="4"/><rect x="8" y="52" width="28" height="28" stroke="#00f" strokeWidth="4"/><circle cx="22" cy="66" r="9" fill="#00f" stroke="none"/><path d="M40 50L50 40M42 40H50V48" strokeWidth="3"/></>],
    ['Break line', 'grey', <><path d="M14 41H78" stroke="#f00" strokeWidth="7" strokeLinecap="round"/><path d="M38 41H54" stroke="#00009c" strokeWidth="9"/></>],
    ['Spacing', 'grey', <><path d="M14 8V80M74 8V80" strokeWidth="3"/><path d="M18 44H32M70 44H56M26 36L18 44L26 52M62 36L70 44L62 52M34 30H54V56H34Z" stroke="#00f" strokeWidth="3"/><text x="44" y="52" fontSize="24" textAnchor="middle" fontFamily={mono} fontWeight="bold" fill="#00f" stroke="none">4</text></>],
    ['Merge', 'grey', <><path d="M12 16H54V38H76V78H32V58H12Z" fill="#00f" stroke="none"/><circle cx="27" cy="32" r="12" fill="#d0d0d0" stroke="none"/><circle cx="56" cy="58" r="14" fill="#d0d0d0" stroke="none"/></>],
    ['Triangle', 'grey', <><path d="M15 66L51 29L78 66" stroke="#f00" strokeWidth="6"/><path d="M15 68H78" stroke="#00f" strokeWidth="6"/><path d="M50 60V46M42 52L50 44L58 52" strokeWidth="3"/></>],
    ['Stretch peak', 'grey', <><path d="M8 84L42 12L78 84" stroke="#f00" strokeWidth="6"/><path d="M8 86L42 58L78 86" stroke="#00f" strokeWidth="6"/><path d="M44 52V36M37 43L44 35L51 43" strokeWidth="3"/></>],
    ['Stretch arc', 'grey', <><path d="M14 60L30 18H60L76 60" stroke="#f00" strokeWidth="8"/><path d="M4 84L14 61H76L86 84" stroke="#00f" strokeWidth="8"/><path d="M45 50V32M37 40L45 31L53 40" strokeWidth="3"/></>],
    ['Stretch segment', 'grey', <><path d="M14 60L30 18H60L76 60" stroke="#f00" strokeWidth="8"/><path d="M2 61H88" stroke="#00f" strokeWidth="8"/><path d="M45 50V32M37 40L45 31L53 40M6 52L26 72M26 52L6 72M64 52L84 72M84 52L64 72" strokeWidth="3"/></>],
    ['Select', 'gold', <path d={pointer} fill="#000" stroke="none"/>],
    ['Select frame', 'gold', <><rect x="14" y="13" width="60" height="64" stroke="#f02000" strokeWidth="6"/><path d={pointer} fill="#000" stroke="none"/></>],
    ['Select polygon', 'gold', <><path d="M34 13H74V76H34L14 56V32Z" stroke="#f02000" strokeWidth="6"/><path d={pointer} fill="#000" stroke="none"/></>],
    ['Select net', 'gold', <><path d="M19 4V50M18 74H36V46H50V24H70" strokeWidth="3"/><circle cx="19" cy="50" r="7" fill="#f02000"/><circle cx="17" cy="74" r="7" fill="#20d020"/><circle cx="71" cy="23" r="7" fill="#20d020"/><path d={pointer} transform="translate(20 12)" fill="#000" stroke="none"/></>],
];

const ToolSet = ({items, grey}) => (
    <ToolGrid $grey={grey}>
        {items.map(([name, tone, icon]) => (
            <ToolButton key={name} $tone={tone} aria-label={name}>
                <svg viewBox="0 0 90 90" fill="none" stroke="#000">
                    <rect x="1.500" y="1.500" width="87" height="87" strokeWidth="3"/>
                    {icon}
                </svg>
            </ToolButton>
        ))}
    </ToolGrid>
);

const menus = [['', 'F', 'ile'], ['', 'E', 'dit'], ['', 'A', 'ctions'], ['O', 'p', 'tions'], ['Analysis'],
    ['DFM'], ['', 'S', 'tep'], ['', 'R', 'out'], ['', 'W', 'indows']];

const Logo = () => (
    <svg width="166" height="44" viewBox="0 0 166 44">
        <path d="M2 10H16L22 13L16 15ZM5 17H16L22 20L16 22ZM0 24H14L20 27L14 29ZM2 30H13L19 31L13 34Z" fill="#f01818"/>
        <text x="23" y="33" fontSize="32" fontFamily={'"Liberation Sans", sans-serif'} fontWeight="bold" fontStyle="italic"
              fill="#000090">Frontline</text>
        <circle cx="65" cy="24" r="9" fill="#9bdbdb" stroke="#000090" strokeWidth="2"/>
        <path d="M65 20L69 24L65 28L61 24Z" fill="#f00000"/>
    </svg>
);

const taskIcons = [
    ['Shell', <><path d="M15 27L3 16Q0 6 8 3Q15 -1 22 3Q30 7 27 16Z" fill="#ffd98a" stroke="#d08a2a"/><path d="M15 27L6 6M15 27L11 3M15 27L16 2M15 27L22 4M15 27L26 9" stroke="#c98c30"/><path d="M19 9L21 16L28 17L23 21L25 28L19 24L13 28L15 21L10 17L17 16Z" fill="#f0882a" stroke="#a85410"/></>],
    ['Notes', <><rect x="3" y="1" width="24" height="28" rx="2" fill="#eaf8ff" stroke="#8cc"/><path d="M6 5H24M6 9H24M6 13H24M6 17H24M6 21H24M6 25H24" stroke="#2385b5" strokeWidth="2"/></>],
    ['G', <path d="M28 3L12 3L5 14L2 22L5 28H22L27 14H16L15 18H20L18 23H10L9 20L14 9H24Z" fill="#e02414" stroke="#6e0f08"/>],
    ['Disk', <><path d="M1 1H28L29 3V29H1Z" fill="#2436c4"/><rect x="8" y="1" width="14" height="10" fill="#e8ecf4"/><rect x="16" y="2" width="4" height="8" fill="#2436c4"/><rect x="4" y="14" width="23" height="14" fill="#fff"/><path d="M6 18H25M6 22H15M6 26H15" stroke="#c03030"/><text x="16" y="27" fontSize="8" fontFamily={sans} fill="#222">64</text></>],
    ['P', <><path fillRule="evenodd" d="M8 1H20Q29 2 29 11Q28 21 18 21H14V28H2L6 24V18H3V14H6V9H4V5ZM15 7V14H18Q21 13 21 10Q20 7 18 7Z" fill="#1c9a4c" stroke="#0d5c33"/><path d="M8 7H13M8 11H13M8 15H13M8 19H11M7 23H11" stroke="#0d5c33"/></>],
    ['Bird', <><rect x="1" y="1" width="28" height="28" rx="5" fill="#1298f8"/><path d="M9 5Q20 8 20 15L23 16L17 22L14 27L14 21Q10 18 11 15Q8 11 9 5Z" fill="#fff"/></>],
    ['Word', <><rect x="11" y="4" width="17" height="23" fill="#fff" stroke="#2b5797"/><path d="M14 10H26M14 14H26M14 18H26M14 22H26" stroke="#2b5797" strokeWidth="2"/><path d="M2 4L17 2V25L2 23Z" fill="#e9f1fc" stroke="#2b5797"/><text x="3" y="18" fontSize="13" fontWeight="bold" fontFamily={sans} fill="#1c4a94">W</text></>, true],
    ['Excel', <><rect x="11" y="8" width="17" height="20" fill="#fff" stroke="#3a9a4a"/><path d="M14 14H28M14 20H28M20 9V27" stroke="#3a9a4a" strokeWidth="2"/><path d="M2 4L17 2V25L2 23Z" fill="#e8f6e8" stroke="#2a8a3c"/><path d="M5 7L14 20M14 7L5 20" stroke="#1f7030" strokeWidth="3"/></>, true],
    ['CAM', <><ellipse cx="17" cy="18" rx="13" ry="8" fill="#1b9a98" stroke="#074848"/><ellipse cx="17" cy="16" rx="9" ry="6" fill="#35c0b4" stroke="#075050"/><circle cx="17" cy="15" r="4" fill="#e0d040" stroke="#20604c"/><path d="M1 7L7 2L13 7L7 10Z" fill="#28c4b8"/><path d="M3 10Q0 18 10 24" fill="none" stroke="#d8d8c0"/></>],
];

const App = () => {
    const [active, setActive] = useState('bs');
    const [xy, setXY] = useState('');

    return (
        <Desktop>
            <GlobalStyle/>
            <TitleBar>
                <TitleText>
                    <svg width="16" height="16" viewBox="0 0 16 16">
                        <rect x="0.500" y="0.500" width="15" height="15" fill="#eee" stroke="#333"/>
                        <path d="M0 2H16" stroke="#122a7c" strokeWidth="3"/>
                        <path d="M4 5L11 13M11 5L4 13" stroke="#a0a010" strokeWidth="2"/>
                    </svg>
                    Graphic Editor 9.07b2 (00@HY-HYCAM-PC411 - Windows, pid:6656)
                </TitleText>
                <WindowButtons>
                    <WindowButton aria-label="Minimize">
                        <svg width="12" height="12"><rect x="1" y="6" width="10" height="3" fill="#fff" stroke="#444"/></svg>
                    </WindowButton>
                    <WindowButton aria-label="Restore">
                        <svg width="12" height="12" fill="none" stroke="#fff" strokeWidth="2"><path d="M4 3V1H11V8H9"/><rect x="1" y="4" width="7" height="7"/></svg>
                    </WindowButton>
                    <WindowButton $close aria-label="Close">
                        <svg width="12" height="12"><path d="M2 2L10 10M10 2L2 10" stroke="#fff" strokeWidth="3"/></svg>
                    </WindowButton>
                </WindowButtons>
            </TitleBar>

            <Header>
                <MenuBar as="nav">
                    {menus.map(([before, key, after]) => (
                        <MenuButton key={before + key}>{before}{key && <u>{key}</u>}{after}</MenuButton>
                    ))}
                    <MenuButton $last>Help</MenuButton>
                </MenuBar>
                <Brand>
                    <Logo/>
                    <Product>Genesis 2000<em>Graphic Editor</em></Product>
                    <HeaderClock>24 Mar 2023<br/>07:31 PM</HeaderClock>
                </Brand>
            </Header>

            <Workspace>
                <Sidebar>
                    <InfoBox>Job : 4s7md287a0</InfoBox>
                    <InfoBox>Step: cam</InfoBox>
                    <MatrixFrame><MatrixButton>Job Matrix ...</MatrixButton></MatrixFrame>
                    <LayerArea>
                        <LayerList>
                            {layerGroups.map((group) => (
                                <LayerGroup key={group[0][0]}>
                                    {group.map(([name, color, swatch]) => (
                                        <LayerRow key={name}>
                                            <LayerCheck type="checkbox" id={`layer-${name}`} checked={active === name}
                                                        onChange={() => setActive(name)}/>
                                            <LayerSwatch $color={swatch}/>
                                            <LayerName htmlFor={`layer-${name}`} $color={color}>
                                                {name}
                                                {active === name && (
                                                    <svg width="5" height="5" viewBox="0 0 5 5">
                                                        <path d="M0 0H5V5H0Z"/>
                                                        <path d="M1 1h1v1h-1zM3 1h1v1h-1zM1 3h1v1h-1zM3 3h1v1h-1z" fill="#fff"/>
                                                    </svg>
                                                )}
                                            </LayerName>
                                        </LayerRow>
                                    ))}
                                </LayerGroup>
                            ))}
                        </LayerList>
                    </LayerArea>
                    <SelectedBox>Selected : 0</SelectedBox>
                </Sidebar>

                <Canvas><Board/></Canvas>

                <ToolColumn>
                    <ToolSet items={tools}/>
                    <ToolSet items={editTools} grey/>
                    <Overview><OverviewMap/></Overview>
                    <Coordinates>{'X = 0.131119"\nY = 1.384943"'}</Coordinates>
                </ToolColumn>
            </Workspace>

            <CommandBar>
                <CommandButton aria-label="Snap">
                    <svg viewBox="0 0 20 20" fill="none" stroke="#000"><rect x="1" y="1" width="18" height="18"/><path d="M5 5L15 15M5 9V5H9M15 11V15H11"/></svg>
                </CommandButton>
                <CommandButton aria-label="Angle">
                    <svg viewBox="0 0 20 20" fill="none" stroke="#000"><rect x="1" y="1" width="18" height="18"/><path d="M3 16H8M3 16L15 4M6 5V9M9 15q2-4 4 0q-2 2-4 0M14 12l3 4M17 12l-3 4"/></svg>
                </CommandButton>
                <CommandButton $green aria-label="Grid snap">
                    <svg viewBox="0 0 20 20" fill="none" stroke="#000"><rect x="1" y="1" width="18" height="18"/><path d="M4 8L8 4H16V16H4ZM4 10H16M10 4V16"/></svg>
                </CommandButton>
                <XYLabel htmlFor="xy">X Y :</XYLabel>
                <XYInput id="xy" value={xy} onChange={(e) => setXY(e.target.value)}/>
                <CommandButton $green aria-label="Apply">
                    <svg viewBox="0 0 20 20" fill="none" stroke="#000"><rect x="2" y="1" width="16" height="18"/><path d="M10 4V12M10 14V17" strokeWidth="2"/></svg>
                </CommandButton>
                <Prompt>&lt;M1&gt; - Select first corner</Prompt>
                <UnitFrame>
                    <UnitSelect aria-label="Units" defaultValue="Inch">
                        <option>Inch</option>
                        <option>MM</option>
                    </UnitSelect>
                    <UnitMark/>
                </UnitFrame>
            </CommandBar>
            <MessageBar><div/></MessageBar>

            <Taskbar>
                <StartButton aria-label="Start">
                    <svg width="38" height="38" viewBox="0 0 38 38">
                        <defs>
                            <radialGradient id="orb" cx="50%" cy="80%">
                                <stop offset="0" stopColor="#5fd8f8"/>
                                <stop offset="0.500" stopColor="#2a78b4"/>
                                <stop offset="1" stopColor="#5a7fa6"/>
                            </radialGradient>
                        </defs>
                        <circle cx="19" cy="19" r="17" fill="url(#orb)" stroke="#9ab8d4"/>
                        <path d="M10 12Q14 9 18 12L16 19Q12 16 8 19Z" fill="#f0641e"/>
                        <path d="M20 13Q24 15 29 12L27 19Q22 22 18 19Z" fill="#8cc63c"/>
                        <path d="M8 21Q12 18 16 21L14 28Q10 25 6 28Z" fill="#3c9ce8"/>
                        <path d="M18 21Q22 24 26 21L24 28Q20 31 16 28Z" fill="#fcc62c"/>
                    </svg>
                </StartButton>
                {taskIcons.map(([name, icon, stack]) => (
                    <TaskButton key={name} $stack={stack} aria-label={name}>
                        <svg viewBox="0 0 30 30" fill="none">{icon}</svg>
                    </TaskButton>
                ))}
                <TaskButton $active $stack aria-label="Graphic Editor">
                    <svg viewBox="0 0 30 30">
                        <path d="M2 2H9L28 28H21Z" fill="#6a1280" stroke="#fff"/>
                        <path d="M27 2L3 28" stroke="#fff" strokeWidth="3"/>
                        <path d="M27 2L3 28" stroke="#3c0c4c" strokeWidth="2"/>
                    </svg>
                </TaskButton>
                <Tray>
                    <svg width="16" viewBox="0 0 16 18"><rect x="0" y="8" width="16" height="8" rx="1" fill="#c8c8c8"/><path d="M2 10H14M2 12H14M4 14H12" stroke="#555" strokeDasharray="1 1"/><path d="M2 7Q4 3 9 5T14 2" fill="none" stroke="#bbb"/></svg>
                    <svg width="16" viewBox="0 0 16 18"><circle cx="8" cy="8" r="7" fill="#1c2cc8" stroke="#c8d0f0"/><text x="8" y="12" fontSize="11" fontWeight="bold" textAnchor="middle" fontFamily={sans} fill="#fff">?</text></svg>
                    <svg width="9" viewBox="0 0 9 18" fill="none" stroke="#fff"><path d="M3 3V1H8V4H6M1 3H6V6H1Z"/><path d="M2 14H7L5 16Z" fill="#fff" stroke="none"/></svg>
                    <svg width="8" viewBox="0 0 8 18"><path d="M0 12L4 8L8 12Z" fill="#fff"/></svg>
                    <svg width="16" viewBox="0 0 16 18"><path d="M2 3V17M3 4H10V10H3" stroke="#fff" fill="#fff"/><circle cx="11" cy="12" r="5" fill="#e03020"/><path d="M9 10L13 14M13 10L9 14" stroke="#fff" strokeWidth="2"/></svg>
                    <svg width="15" viewBox="0 0 15 18"><path d="M0 7H3L7 3V16L3 12H0Z" fill="#fff"/><path d="M9 7Q11 9 9 12M11 5Q15 9 11 14" stroke="#fff" fill="none"/></svg>
                    <svg width="16" viewBox="0 0 16 18" fill="none" stroke="#fff"><path d="M5 5H15V13H5ZM10 13V16M6 16H14" strokeWidth="2"/><path d="M1 3V6H4V3M2 6V14"/></svg>
                    <TrayClock>19:33<br/>2023/3/24</TrayClock>
                    <ShowDesktop aria-label="Show desktop"/>
                </Tray>
            </Taskbar>
        </Desktop>
    );
};

export default App;
